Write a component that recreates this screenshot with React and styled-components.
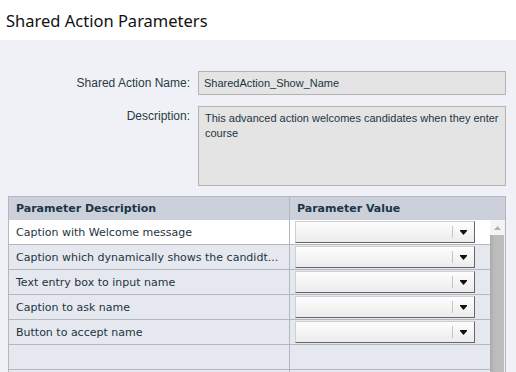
import React from 'react'
import styled, { createGlobalStyle } from 'styled-components'

const params = [
  { desc: 'Caption with Welcome message', active: true },
  { desc: 'Caption which dynamically shows the candidt...' },
  { desc: 'Text entry box to input name' },
  { desc: 'Caption to ask name' },
  { desc: 'Button to accept name' },
  { desc: '', empty: true },
  { desc: '', empty: true },
]

const GlobalStyle = createGlobalStyle`
  html, body {
    margin: 0;
    padding: 0;
    width: 516px;
    height: 372px;
    overflow: hidden;
    background: #f0f1f6;
  }
`

const Page = styled.div`
  width: 516px;
  height: 372px;
  overflow: hidden;
  display: flex;
  flex-direction: column;
`

const TitleBar = styled.div`
  height: 40px;
  flex-shrink: 0;
  background: #ffffff;
  display: flex;
  align-items: center;
  padding: 0 0 0 6px;
  font-family: 'Noto Sans', sans-serif;
  font-size: 16.5px;
  color: #111111;
`

const Content = styled.div`
  flex: 1;
  background: #f0f1f6;
  padding: 31px 10px 0 8px;
  display: flex;
  flex-direction: column;
`

const FormRow = styled.div`
  display: grid;
  grid-template-columns: 182px 1fr;
  column-gap: 8px;
  margin-bottom: ${p => p.$gap || 0}px;
`

const Label = styled.div`
  text-align: right;
  font-family: 'Liberation Sans', sans-serif;
  font-size: 12px;
  color: #2a3a45;
  padding-top: ${p => p.$top || 5}px;
`

const Field = styled.div`
  height: ${p => p.$h}px;
  box-sizing: border-box;
  background: #e4e4e4;
  border: 1px solid #b3b3b3;
  padding: ${p => (p.$multi ? '4px 6px' : '0 5px')};
  display: ${p => (p.$multi ? 'block' : 'flex')};
  align-items: center;
  font-family: 'Liberation Sans', sans-serif;
  font-size: 11px;
  line-height: 15px;
  color: #1d3542;
`

const Table = styled.div`
  margin-top: 10px;
  width: 498px;
  border: 1px solid #b2b7c1;
  border-bottom: none;
  box-sizing: border-box;
  font-family: 'DejaVu Sans', Verdana, sans-serif;
  font-size: 11px;
  color: #1e3440;
`

const HeadRow = styled.div`
  display: flex;
  height: 23px;
  background: #cbd0db;
  font-weight: bold;
  color: #193646;
`

const Cell = styled.div`
  box-sizing: border-box;
  width: ${p => p.$w}px;
  flex-shrink: 0;
  border-right: ${p => (p.$divider ? '1px solid #b2b7c1' : 'none')};
  padding: 0 ${p => p.$pad || 0}px 0 ${p => p.$pad || 0}px;
  display: flex;
  align-items: center;
  white-space: nowrap;
  overflow: hidden;
`

const Body = styled.div`
  display: flex;
`

const Rows = styled.div`
  width: 481px;
  flex-shrink: 0;
`

const Row = styled.div`
  display: flex;
  height: 24px;
  border-bottom: 1px solid #b2b7c1;
  background: ${p => (p.$active ? '#ffffff' : '#e5e8ef')};
`

const Select = styled.div`
  width: 180px;
  height: 22px;
  box-sizing: border-box;
  display: flex;
  align-items: center;
  justify-content: flex-end;
  background: linear-gradient(#fdfdfd, #ececec);
  border-top: 1px solid #cfcfcf;
  border-left: 1px solid #cfcfcf;
  border-right: 1px solid #666666;
  border-bottom: 1px solid #666666;
`

const Divider = styled.span`
  width: 1px;
  height: 12px;
  background: #c4c4c4;
`

const Arrow = styled.span`
  width: 21px;
  display: flex;
  justify-content: center;
`

const Scrollbar = styled.div`
  width: 14px;
  flex-shrink: 0;
  display: flex;
  flex-direction: column;
`

const ScrollUp = styled.div`
  height: 15px;
  background: #f4f4f5;
  display: flex;
  align-items: center;
  justify-content: center;
`

const Track = styled.div`
  flex: 1;
  background: linear-gradient(90deg, #a9a9a9, #bbbbbb 30%, #bdbdbd);
`

function Dropdown() {
  return (
    <Select>
      <Divider />
      <Arrow>
        <svg width="7" height="5" viewBox="0 0 7 5">
          <path d="M0 0h7v1L3.5 5 0 1z" fill="#111" />
        </svg>
      </Arrow>
    </Select>
  )
}

export default function App() {
  return (
    <Page>
      <GlobalStyle />
      <TitleBar>Shared Action Parameters</TitleBar>
      <Content>
        <FormRow $gap={11}>
          <Label>Shared Action Name:</Label>
          <Field $h={24}>SharedAction_Show_Name</Field>
        </FormRow>
        <FormRow>
          <Label $top={3}>Description:</Label>
          <Field $h={80} $multi>
            This advanced action welcomes candidates when they enter course
          </Field>
        </FormRow>
        <Table>
          <HeadRow>
            <Cell $w={281} $divider $pad={7}>Parameter Description</Cell>
            <Cell $w={215} $pad={7}>Parameter Value</Cell>
          </HeadRow>
          <Body>
            <Rows>
              {params.map((p, i) => (
                <Row key={i} $active={p.active}>
                  <Cell $w={281} $divider $pad={7}>{p.desc}</Cell>
                  <Cell $w={200} $pad={5}>{!p.empty && <Dropdown />}</Cell>
                </Row>
              ))}
            </Rows>
            <Scrollbar>
              <ScrollUp>
                <svg width="7" height="4" viewBox="0 0 7 4">
                  <path d="M3.5 0L7 4H0z" fill="#b0b0b0" />
                </svg>
              </ScrollUp>
              <Track />
            </Scrollbar>
          </Body>
        </Table>
      </Content>
    </Page>
  )
}
